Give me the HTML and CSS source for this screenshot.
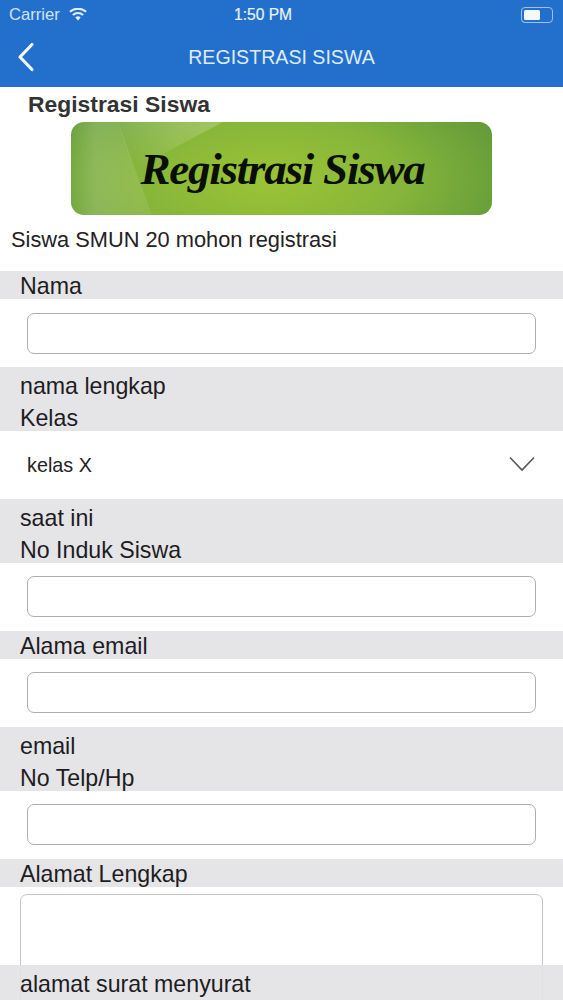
FILE: index.html
```html
<!DOCTYPE html>
<html lang="id">
<head>
<meta charset="utf-8">
<title>Registrasi Siswa</title>
<link rel="stylesheet" href="styles.css">
</head>
<body>
<header class="appbar">
  <div class="status">
    <div class="status-left">
      <span>Carrier</span>
      <svg class="wifi" viewBox="0 0 18 13" width="18" height="13" aria-hidden="true">
        <path d="M9 12.600 6.300 9.600a3.900 3.900 0 0 1 5.400 0Z" fill="#e4eefa"/>
        <path d="M4.600 7.800a6.400 6.400 0 0 1 8.800 0l1.400-1.500a8.500 8.500 0 0 0-11.600 0Z" fill="#e4eefa"/>
        <path d="M1.600 4.600a10.800 10.800 0 0 1 14.800 0l1.400-1.500a12.900 12.900 0 0 0-17.600 0Z" fill="#e4eefa"/>
      </svg>
    </div>
    <div class="clock">1:50 PM</div>
    <div class="battery"><span class="battery-level"></span></div>
  </div>
  <div class="nav">
    <svg class="back" viewBox="0 0 18 30" width="18" height="30" aria-hidden="true">
      <path d="M15 2.500 3 15l12 12.500" fill="none" stroke="#f2f7fd" stroke-width="3.200" stroke-linecap="round" stroke-linejoin="round"/>
    </svg>
    <div class="title">REGISTRASI SISWA</div>
  </div>
</header>

<main>
  <h1 class="heading">Registrasi Siswa</h1>
  <div class="banner">
    <svg class="banner-art" viewBox="0 0 421 93" width="421" height="93" aria-hidden="true">
      <defs>
        <linearGradient id="panel" x1="0" y1="0" x2="1" y2="0">
          <stop offset="0" stop-color="#fff" stop-opacity=".03"/>
          <stop offset=".3" stop-color="#fff" stop-opacity=".16"/>
          <stop offset="1" stop-color="#fff" stop-opacity=".08"/>
        </linearGradient>
        <linearGradient id="wedge" x1="0.100" y1="0.900" x2="0.750" y2="0">
          <stop offset="0" stop-color="#fff" stop-opacity="0"/>
          <stop offset="1" stop-color="#fff" stop-opacity=".2"/>
        </linearGradient>
      </defs>
      <path d="M47 0H152L62 48Z" fill="url(#wedge)"/>
      <path d="M0 0H47L81 93H0Z" fill="url(#panel)"/>
    </svg>
    <span class="banner-text">Registrasi Siswa</span>
  </div>
  <p class="intro">Siswa SMUN 20 mohon registrasi</p>

  <div class="band">Nama</div>
  <div class="field"><div class="input"></div></div>

  <div class="band band-double">nama lengkap<br>Kelas</div>
  <div class="select">
    <span>kelas X</span>
    <svg viewBox="0 0 26 16" width="26" height="16" aria-hidden="true">
      <path d="M1 1.500 13 14 25 1.500" fill="none" stroke="#555" stroke-width="1.600"/>
    </svg>
  </div>

  <div class="band band-double">saat ini<br>No Induk Siswa</div>
  <div class="field field-tight"><div class="input"></div></div>

  <div class="band">Alama email</div>
  <div class="field field-tight"><div class="input"></div></div>

  <div class="band band-double">email<br>No Telp/Hp</div>
  <div class="field field-tight"><div class="input"></div></div>

  <div class="band">Alamat Lengkap</div>
  <div class="area-wrap"><div class="area"></div></div>
  <div class="band band-over">alamat surat menyurat</div>
</main>
</body>
</html>
```
FILE: styles.css
```css
* { box-sizing: border-box; }
html, body { margin: 0; height: 1000px; overflow: hidden; background: #fff; }
body { font-family: "Liberation Sans", Arial, sans-serif; color: #1d1d1f; }

.appbar { height: 87px; background: #2270cc; color: #eaf2fb; }
.status { height: 29px; position: relative; display: flex; align-items: center; justify-content: space-between; padding: 1px 10px 0 9px; font-size: 16.600px; }
.status-left { display: flex; align-items: center; gap: 9px; color: #d3e3f6; }
.wifi { margin-top: -2px; }
.clock { position: absolute; left: 234px; top: 6px; font-size: 15.600px; line-height: 18px; color: #eaf2fb; -webkit-text-stroke: 0.200px #eaf2fb; }
.battery { width: 32px; height: 16px; border: 1px solid #9cc3ee; border-radius: 4px; padding: 2px; margin-top: -1px; }
.battery-level { display: block; width: 16px; height: 10px; background: #f4f8fd; border-radius: 1.500px; }

.nav { height: 58px; position: relative; display: flex; align-items: center; justify-content: center; padding-bottom: 1px; }
.back { position: absolute; left: 17px; top: 13px; }
.title { font-size: 19.600px; color: #dfebf9; }

.heading { margin: 0; height: 35px; padding: 5px 0 0 28px; font-size: 22.900px; line-height: 24px; font-weight: 700; color: #333; }
.banner { position: relative; overflow: hidden; margin-left: 71px; width: 421px; height: 93px; border-radius: 13px; display: flex; align-items: center; justify-content: center; padding: 1px 0 0 2px;
  background: radial-gradient(ellipse 58% 120% at 47% 62%, #9bc435 0%, #86b53a 55%, #649c3a 100%);
}
.banner-art { position: absolute; left: 0; top: 0; }
.banner-text { position: relative; font-family: "Liberation Serif", "Times New Roman", serif; font-style: italic; font-weight: 700; font-size: 45px; letter-spacing: -1.250px; line-height: 48px; color: #0a0f06; white-space: nowrap; }
.intro { margin: 0; height: 56px; padding: 13px 0 0 11px; font-size: 21.800px; line-height: 24px; color: #222; }

.band { background: #e5e4e7; height: 28px; padding-left: 20px; font-size: 23.200px; line-height: 30px; color: #1d1d1f; }
.band-double { height: 64px; padding-top: 3px; line-height: 32px; }
.band-over { position: relative; background: rgba(226,225,228,.9); height: 40px; line-height: 39px; }

.field { height: 68px; padding: 14px 27px 0; }
.field-tight { padding-top: 13px; }
.input { height: 41px; width: 509px; border: 1px solid #aeaeb2; border-radius: 7px; background: #fff; }

.select { height: 68px; padding: 0 28px 0 27px; display: flex; align-items: center; justify-content: space-between; font-size: 19.800px; color: #222; }
.select svg { margin-top: -2px; }

.area-wrap { height: 78px; padding: 7px 20px 0; }
.area { height: 200px; width: 523px; border: 1px solid #c6c6ca; border-radius: 7px; background: #fff; }
```
